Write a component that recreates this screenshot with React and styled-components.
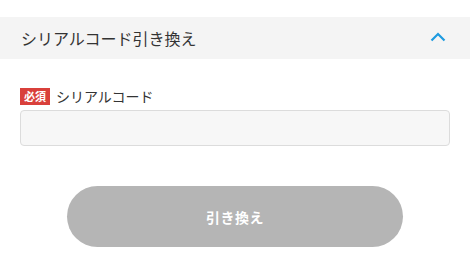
import React from "react";
import styled, { createGlobalStyle } from "styled-components";

const GlobalStyle = createGlobalStyle`
  body {
    margin: 0;
    background: #fff;
    font-family: "Noto Sans CJK JP", "Noto Sans", sans-serif;
    color: #333;
  }
`;

const Page = styled.div`
  padding-top: 17px;
`;

const Header = styled.div`
  height: 42px;
  background: #f4f4f4;
  display: flex;
  align-items: center;
  justify-content: space-between;
  padding: 0 24px 0 21px;
  font-size: 16px;
  color: #333;
`;

const Chevron = styled.svg`
  width: 16px;
  height: 10px;
  margin-top: -3px;
`;

const Body = styled.div`
  padding: 28px 20px 0;
`;

const LabelRow = styled.div`
  display: flex;
  align-items: center;
  gap: 6px;
  height: 18px;
  font-size: 14px;
  color: #333;
`;

const Badge = styled.span`
  background: #d9403b;
  color: #fff;
  font-size: 11px;
  font-weight: bold;
  width: 30px;
  height: 17px;
  display: flex;
  align-items: center;
  justify-content: center;
`;

const Input = styled.input`
  display: block;
  box-sizing: border-box;
  width: 100%;
  height: 36px;
  margin-top: 5px;
  background: #f7f7f7;
  border: 1px solid #dcdcdc;
  border-radius: 4px;
  outline: none;
`;

const ButtonWrap = styled.div`
  display: flex;
  justify-content: center;
  padding-top: 40px;
`;

const Button = styled.button`
  width: 336px;
  height: 61px;
  border: none;
  border-radius: 31px;
  background: #b5b5b5;
  color: #fff;
  font-family: inherit;
  font-size: 14px;
  font-weight: bold;
  letter-spacing: 0.5px;
`;

export default function App() {
  return (
    <Page>
      <GlobalStyle />
      <Header>
        <span>シリアルコード引き換え</span>
        <Chevron viewBox="0 0 16 10">
          <polyline points="1.5,8.5 8,2 14.5,8.5" fill="none" stroke="#1e9be0" strokeWidth="2.2" />
        </Chevron>
      </Header>
      <Body>
        <LabelRow>
          <Badge>必須</Badge>
          <span>シリアルコード</span>
        </LabelRow>
        <Input type="text" />
        <ButtonWrap>
          <Button type="button">引き換え</Button>
        </ButtonWrap>
      </Body>
    </Page>
  );
}
